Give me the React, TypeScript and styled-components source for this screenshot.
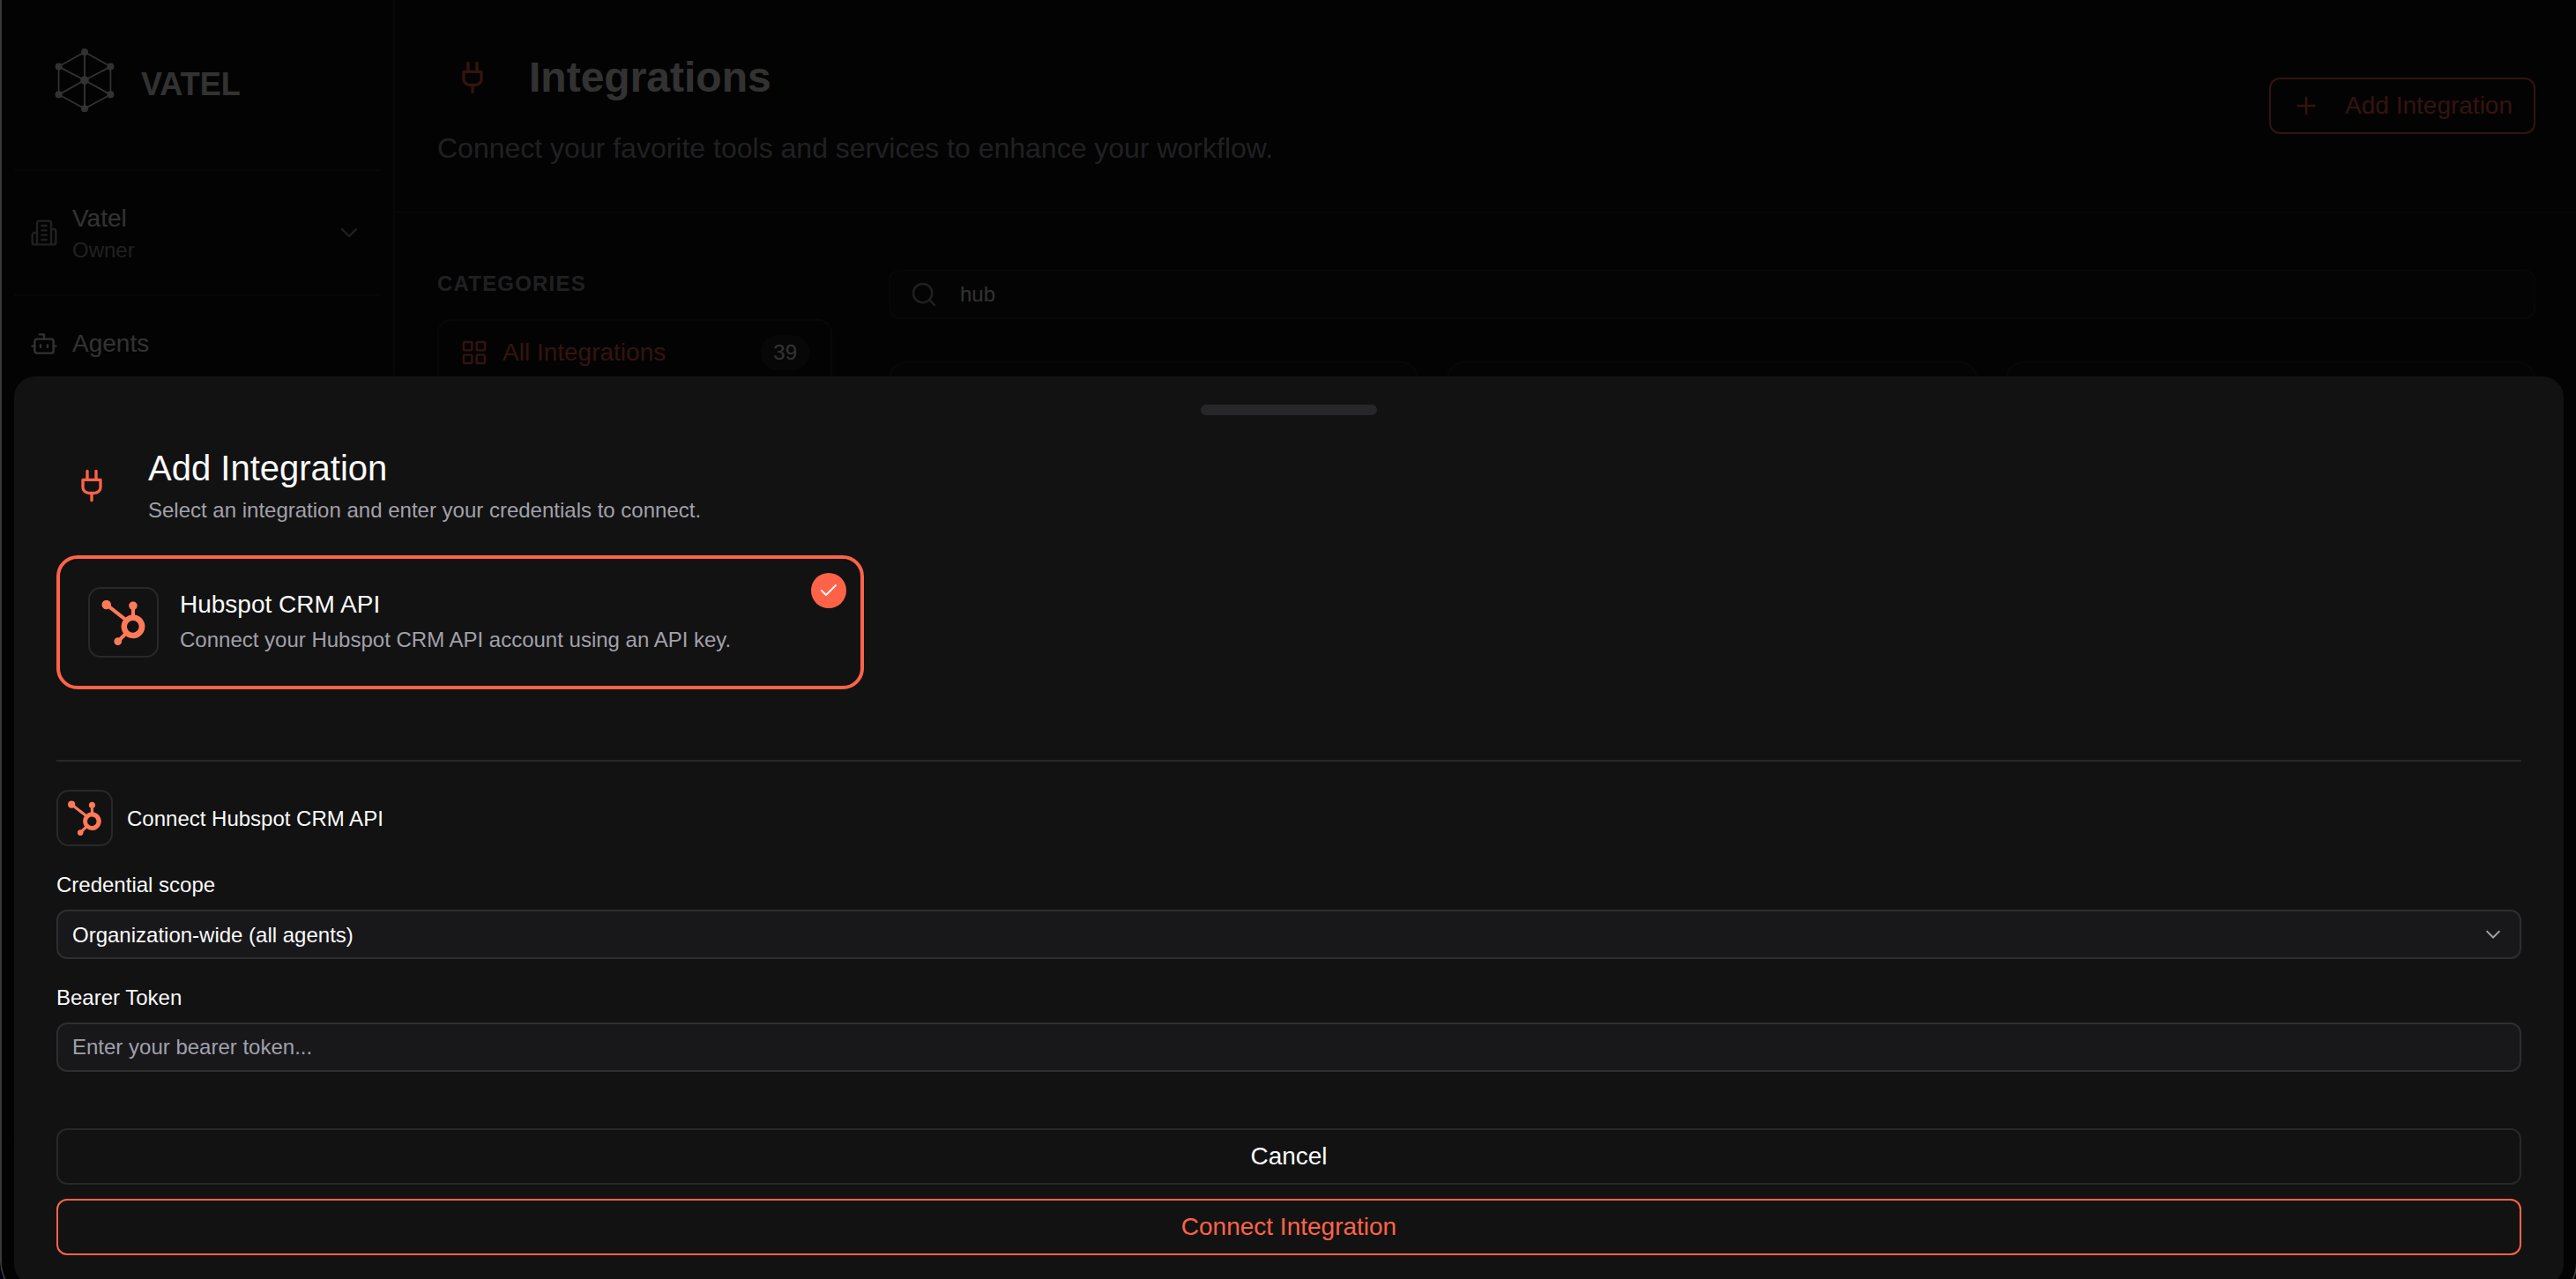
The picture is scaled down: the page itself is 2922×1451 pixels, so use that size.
import React from "react";
import styled, { createGlobalStyle } from "styled-components";

const color = {
  page: "#0f0f0f",
  sheet: "#121212",
  field: "#18181b",
  line: "#27272a",
  border: "#282828",
  fieldBorder: "#2e2e2e",
  text: "#fafafa",
  muted: "#a1a1aa",
  accent: "#ff6347",
  hubspot: "#ff7a59",
};

const GlobalStyle = createGlobalStyle`
  * { box-sizing: border-box; }
  html, body { margin: 0; padding: 0; background: #01000f; overflow: hidden; }
  body { font-family: "Liberation Sans", Arial, sans-serif; color: ${color.text}; }
  h1, h2, h3, p { margin: 0; font-weight: 400; }
  button, input { font: inherit; color: inherit; margin: 0; }
  svg { display: block; flex: none; }
`;

const Screen = styled.div`
  width: 2922px;
  height: 1451px;
  overflow: hidden;
`;

const Window = styled.div`
  position: relative;
  display: flex;
  width: 2924px;
  height: 1474px;
  background: ${color.page};
  border-radius: 0 0 42px 42px;
  overflow: hidden;
`;

const WindowFrame = styled.div`
  position: absolute;
  inset: -2px 0 0 0;
  border: 2px solid #383838;
  border-radius: 0 0 42px 42px;
  pointer-events: none;
`;

const Backdrop = styled.div`
  position: absolute;
  inset: 0;
  background: rgba(0, 0, 0, 0.8);
`;

/* Sidebar */

const Sidebar = styled.aside`
  display: flex;
  flex-direction: column;
  width: 448px;
  flex: none;
  padding: 0 16px;
  border-right: 2px solid ${color.line};
`;

const Brand = styled.div`
  display: flex;
  align-items: center;
  gap: 24px;
  height: 194px;
  padding: 0 40px 10px;
  border-bottom: 2px solid ${color.line};
`;

const BrandName = styled.span`
  font-size: 36px;
  font-weight: 700;
  line-height: 40px;
  padding-top: 10px;
`;

const Organization = styled.div`
  display: flex;
  align-items: center;
  gap: 16px;
  height: 142px;
  padding: 0 18px;
  border-bottom: 2px solid ${color.line};
  color: ${color.muted};
`;

const OrganizationText = styled.div`
  flex: 1;
  font-size: 24px;
  line-height: 32px;
`;

const OrganizationName = styled.div`
  font-size: 28px;
  line-height: 40px;
  color: ${color.text};
`;

const NavItem = styled.a`
  display: flex;
  align-items: center;
  gap: 16px;
  height: 80px;
  margin-top: 14px;
  padding: 0 18px;
  font-size: 28px;
`;

const SidebarFooter = styled.div`
  margin: auto -16px 0;
  height: 180px;
  border-top: 2px solid #161616;
`;

/* Main area */

const Main = styled.main`
  flex: 1;
  min-width: 0;
`;

const PageHeader = styled.header`
  display: flex;
  align-items: center;
  justify-content: space-between;
  height: 242px;
  padding: 48px;
  border-bottom: 2px solid ${color.line};
`;

const TitleRow = styled.div`
  display: flex;
  align-items: center;
  gap: 24px;
`;

const IconTile = styled.div`
  display: flex;
  align-items: center;
  justify-content: center;
  width: 80px;
  height: 80px;
  flex: none;
  color: ${color.accent};
`;

const PageTitle = styled.h1`
  font-size: 48px;
  font-weight: 700;
  line-height: 56px;
`;

const PageSubtitle = styled.p`
  margin-top: 16px;
  font-size: 32px;
  line-height: 48px;
  color: ${color.muted};
`;

const Button = styled.button<{ $tone: "accent" | "plain" }>`
  display: flex;
  align-items: center;
  justify-content: center;
  gap: 28px;
  height: 64px;
  padding: 0 24px;
  font-size: 28px;
  line-height: 40px;
  background: transparent;
  border: 2px solid ${(p) => (p.$tone === "accent" ? color.accent : color.border)};
  border-radius: 12px;
  color: ${(p) => (p.$tone === "accent" ? color.accent : color.text)};
`;

const PageBody = styled.div`
  display: grid;
  grid-template-columns: 448px 1fr;
  gap: 64px;
  padding: 64px 48px 0;
`;

const CategoriesTitle = styled.h2`
  margin-bottom: 24px;
  font-size: 24px;
  font-weight: 700;
  line-height: 32px;
  letter-spacing: 1.2px;
  color: ${color.muted};
`;

const CategoryList = styled.div`
  height: 600px;
  border: 2px solid ${color.line};
  border-radius: 16px;
`;

const CategoryItem = styled.div`
  display: flex;
  align-items: center;
  gap: 16px;
  height: 72px;
  padding: 0 24px;
  font-size: 28px;
  color: ${color.accent};
`;

const Count = styled.span`
  margin-left: auto;
  padding: 0 14px;
  font-size: 24px;
  line-height: 40px;
  border-radius: 20px;
  background: ${color.line};
  color: ${color.text};
`;

const Search = styled.div`
  display: flex;
  align-items: center;
  gap: 25px;
  height: 56px;
  margin-bottom: 48px;
  padding: 0 22px;
  font-size: 24px;
  border: 2px solid ${color.line};
  border-radius: 12px;
  background: #141414;
  color: ${color.muted};
`;

const SearchQuery = styled.span`
  color: ${color.text};
`;

const ResultGrid = styled.div`
  display: grid;
  grid-template-columns: repeat(3, 1fr);
  gap: 32px;
`;

const ResultCard = styled.div`
  height: 320px;
  border: 2px solid ${color.line};
  border-radius: 20px;
  background: #141414;
`;

/* Bottom sheet */

const Sheet = styled.section`
  position: absolute;
  left: 16px;
  right: 16px;
  bottom: 16px;
  height: 1031px;
  display: flex;
  flex-direction: column;
  padding: 32px 48px 34px;
  border-radius: 24px;
  background: ${color.sheet};
`;

const Handle = styled.div`
  align-self: center;
  width: 200px;
  height: 12px;
  border-radius: 6px;
  background: ${color.line};
`;

const SheetHeader = styled.header`
  display: flex;
  align-items: center;
  gap: 24px;
  margin: 32px 0 31px;
`;

const SheetTitle = styled.h2`
  font-size: 40px;
  line-height: 56px;
`;

const SheetSubtitle = styled.p`
  font-size: 24px;
  line-height: 40px;
  color: ${color.muted};
`;

const OptionGrid = styled.div`
  display: grid;
  grid-template-columns: repeat(3, 1fr);
  gap: 24px;
  padding-bottom: 80px;
  border-bottom: 2px solid ${color.border};
`;

const OptionCard = styled.div`
  position: relative;
  display: flex;
  align-items: center;
  gap: 24px;
  height: 152px;
  padding: 0 32px;
  border: 4px solid ${color.accent};
  border-radius: 24px;
`;

const LogoTile = styled.div<{ $size: number }>`
  display: flex;
  align-items: center;
  justify-content: center;
  width: ${(p) => p.$size}px;
  height: ${(p) => p.$size}px;
  flex: none;
  border: 2px solid ${color.border};
  border-radius: 14px;
  color: ${color.hubspot};
`;

const OptionName = styled.h3`
  font-size: 28px;
  line-height: 40px;
`;

const OptionText = styled.p`
  font-size: 24px;
  line-height: 40px;
  color: ${color.muted};
`;

const SelectedMark = styled.span`
  position: absolute;
  top: 16px;
  right: 16px;
  display: flex;
  align-items: center;
  justify-content: center;
  width: 40px;
  height: 40px;
  border-radius: 50%;
  background: ${color.accent};
  color: #fff;
`;

const Form = styled.div`
  display: flex;
  flex-direction: column;
  gap: 32px;
  margin-top: 32px;
`;

const FormHeading = styled.div`
  display: flex;
  align-items: center;
  gap: 16px;
  font-size: 24px;
`;

const RowText = styled.span`
  padding-top: 2px;
`;

const Field = styled.label`
  display: flex;
  flex-direction: column;
  gap: 16px;
  font-size: 24px;
  line-height: 24px;
`;

const SelectBox = styled.div`
  display: flex;
  align-items: center;
  justify-content: space-between;
  height: 56px;
  padding: 0 16px;
  border: 2px solid ${color.fieldBorder};
  border-radius: 12px;
  background: ${color.field};
`;

const TextInput = styled.input`
  height: 56px;
  padding: 0 16px;
  border: 2px solid ${color.fieldBorder};
  border-radius: 12px;
  background: ${color.field};
  &::placeholder {
    color: ${color.muted};
    opacity: 1;
  }
`;

const Actions = styled.div`
  display: flex;
  flex-direction: column;
  gap: 16px;
  margin-top: 64px;
`;

/* Icons */

type IconProps = { size?: number; stroke?: number; children?: React.ReactNode };

const Icon = ({ size = 32, stroke = 1.8, children }: IconProps) => (
  <svg
    width={size}
    height={size}
    viewBox="0 0 24 24"
    fill="none"
    stroke="currentColor"
    strokeWidth={stroke}
    strokeLinecap="round"
    strokeLinejoin="round"
  >
    {children}
  </svg>
);

const PlugIcon = () => (
  <Icon size={40} stroke={2}>
    <path d="M12 22v-5M9 8V2M15 8V2M18 8v5a4 4 0 0 1-4 4h-4a4 4 0 0 1-4-4V8Z" />
  </Icon>
);

const BuildingIcon = () => (
  <Icon>
    <path d="M6 22V4a2 2 0 0 1 2-2h8a2 2 0 0 1 2 2v18Z" />
    <path d="M6 12H4a2 2 0 0 0-2 2v6a2 2 0 0 0 2 2h2" />
    <path d="M18 9h2a2 2 0 0 1 2 2v9a2 2 0 0 1-2 2h-2" />
    <path d="M10 6h4M10 10h4M10 14h4M10 18h4" />
  </Icon>
);

const BotIcon = () => (
  <Icon>
    <path d="M12 8V4H8" />
    <rect width="16" height="12" x="4" y="8" rx="2" />
    <path d="M2 14h2M20 14h2M15 13v2M9 13v2" />
  </Icon>
);

const GridIcon = () => (
  <Icon>
    <rect width="7" height="7" x="3" y="3" rx="1" />
    <rect width="7" height="7" x="14" y="3" rx="1" />
    <rect width="7" height="7" x="14" y="14" rx="1" />
    <rect width="7" height="7" x="3" y="14" rx="1" />
  </Icon>
);

const SearchIcon = () => (
  <Icon>
    <circle cx="11" cy="11" r="8" />
    <path d="m21 21-4.3-4.3" />
  </Icon>
);

const SelectArrow = () => (
  <svg width="28" height="28" viewBox="0 0 28 28" fill="none" stroke={color.muted} strokeWidth="2">
    <path d="M6.6 10.1 14 17.5 21.4 10.1" />
  </svg>
);

const HubspotLogo = ({ size }: { size: number }) => (
  <svg width={size} height={size} viewBox="6.2085 0.6438 244.5155 251.2441" fill="currentColor">
    <path d="M191.385 85.694v-29.506a22.722 22.722 0 0 0 13.101-20.48v-.677c0-12.549-10.173-22.722-22.721-22.722h-.678c-12.549 0-22.722 10.173-22.722 22.722v.677a22.722 22.722 0 0 0 13.101 20.48v29.506a64.342 64.342 0 0 0-30.594 13.47l-80.922-63.03c.577-2.083.878-4.225.912-6.375a25.6 25.6 0 1 0-25.633 25.55 25.323 25.323 0 0 0 12.607-3.43l79.685 62.007c-14.65 22.131-14.258 50.974.987 72.7l-24.236 24.243c-1.96-.626-4-.959-6.057-.987-11.607.01-21.01 9.423-21.007 21.03.003 11.606 9.412 21.014 21.018 21.017 11.607.003 21.02-9.4 21.03-21.007a20.747 20.747 0 0 0-.988-6.056l23.976-23.985c21.423 16.492 50.846 17.913 73.759 3.562 22.912-14.352 34.475-41.446 28.985-67.918-5.49-26.473-26.873-46.734-53.603-50.792m-9.938 97.044a33.17 33.17 0 1 1 0-66.316c17.85.625 32 15.272 32.01 33.134.008 17.86-14.127 32.522-31.977 33.165" />
  </svg>
);

const HEX: [number, number][] = [
  [40, 8],
  [69.4, 24.6],
  [69.4, 56.3],
  [40, 72.2],
  [10.6, 56.3],
  [10.6, 24.6],
];

const VatelLogo = () => (
  <svg width="80" height="80" viewBox="0 0 80 80" stroke="currentColor" fill="none">
    <polygon points={HEX.map((p) => p.join(",")).join(" ")} strokeWidth="1.7" />
    {HEX.map(([x, y]) => (
      <g key={`${x}-${y}`}>
        <line x1="40" y1="40" x2={x} y2={y} strokeWidth="1.9" />
        <circle cx={x} cy={y} r="4" fill="currentColor" stroke="none" />
      </g>
    ))}
    <circle cx="40" cy="40" r="4.8" fill="currentColor" stroke="none" />
  </svg>
);

export default function App() {
  return (
    <Screen>
      <GlobalStyle />
      <Window>
        <Sidebar>
          <Brand>
            <VatelLogo />
            <BrandName>VATEL</BrandName>
          </Brand>
          <Organization>
            <BuildingIcon />
            <OrganizationText>
              <OrganizationName>Vatel</OrganizationName>
              Owner
            </OrganizationText>
            <Icon>
              <path d="m6 9 6 6 6-6" />
            </Icon>
          </Organization>
          <NavItem>
            <BotIcon />
            Agents
          </NavItem>
          <SidebarFooter />
        </Sidebar>

        <Main>
          <PageHeader>
            <div>
              <TitleRow>
                <IconTile>
                  <PlugIcon />
                </IconTile>
                <PageTitle>Integrations</PageTitle>
              </TitleRow>
              <PageSubtitle>
                Connect your favorite tools and services to enhance your workflow.
              </PageSubtitle>
            </div>
            <Button $tone="accent">
              <Icon>
                <path d="M5 12h14M12 5v14" />
              </Icon>
              Add Integration
            </Button>
          </PageHeader>

          <PageBody>
            <div>
              <CategoriesTitle>CATEGORIES</CategoriesTitle>
              <CategoryList>
                <CategoryItem>
                  <GridIcon />
                  All Integrations
                  <Count>39</Count>
                </CategoryItem>
              </CategoryList>
            </div>
            <div>
              <Search>
                <SearchIcon />
                <SearchQuery>hub</SearchQuery>
              </Search>
              <ResultGrid>
                <ResultCard />
                <ResultCard />
                <ResultCard />
              </ResultGrid>
            </div>
          </PageBody>
        </Main>

        <Backdrop />

        <Sheet>
          <Handle />
          <SheetHeader>
            <IconTile>
              <PlugIcon />
            </IconTile>
            <div>
              <SheetTitle>Add Integration</SheetTitle>
              <SheetSubtitle>
                Select an integration and enter your credentials to connect.
              </SheetSubtitle>
            </div>
          </SheetHeader>

          <OptionGrid>
            <OptionCard>
              <LogoTile $size={80}>
                <HubspotLogo size={52} />
              </LogoTile>
              <div>
                <OptionName>Hubspot CRM API</OptionName>
                <OptionText>Connect your Hubspot CRM API account using an API key.</OptionText>
              </div>
              <SelectedMark>
                <Icon size={24}>
                  <path d="M20 6 9 17l-5-5" />
                </Icon>
              </SelectedMark>
            </OptionCard>
          </OptionGrid>

          <Form>
            <FormHeading>
              <LogoTile $size={64}>
                <HubspotLogo size={40} />
              </LogoTile>
              <RowText>Connect Hubspot CRM API</RowText>
            </FormHeading>
            <Field>
              Credential scope
              <SelectBox>
                <RowText>Organization-wide (all agents)</RowText>
                <SelectArrow />
              </SelectBox>
            </Field>
            <Field>
              Bearer Token
              <TextInput placeholder="Enter your bearer token..." />
            </Field>
          </Form>

          <Actions>
            <Button $tone="plain">Cancel</Button>
            <Button $tone="accent">Connect Integration</Button>
          </Actions>
        </Sheet>
        <WindowFrame />
      </Window>
    </Screen>
  );
}
